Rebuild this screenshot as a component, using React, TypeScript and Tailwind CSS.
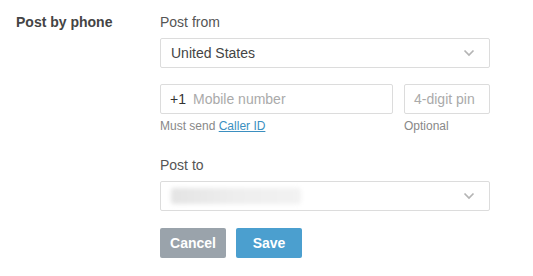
import React from "react";

function Chevron() {
  return (
    <svg width="12" height="8" viewBox="0 0 12 8" className="absolute right-[14px] top-1/2 -translate-y-1/2">
      <path d="M1.5 1.5 L6 6 L10.5 1.5" fill="none" stroke="#b4b4b4" strokeWidth="1.7" />
    </svg>
  );
}

export default function App() {
  return (
    <div
      className="w-[533px] h-[276px] bg-white flex text-[#444]"
      style={{ fontFamily: '"Liberation Sans", Arial, sans-serif' }}
    >
      <div className="w-[160px] pl-[16px] pt-[13px]">
        <div className="text-[14px] font-bold leading-[18px] text-[#444]">Post by phone</div>
      </div>
      <div className="w-[330px] pt-[13px] flex flex-col">
        <div className="text-[14px] leading-[18px] text-[#555] mb-[7px]">Post from</div>
        <div className="relative h-[30px] border border-[#dcdcdc] rounded-[2px] flex items-center pl-[10px] text-[14px] text-[#444]">
          United States
          <Chevron />
        </div>
        <div className="flex gap-[11px] mt-[16px]">
          <div className="flex flex-col w-[233px]">
            <div className="h-[30px] border border-[#dcdcdc] rounded-[2px] flex items-center pl-[9px] text-[14px]">
              <span className="text-[#333]">+1</span>
              <span className="ml-[7px] text-[#aaa]">Mobile number</span>
            </div>
            <div className="mt-[4px] text-[12px] leading-[16px] text-[#888]">
              Must send <span className="text-[#3b8fc0] underline">Caller ID</span>
            </div>
          </div>
          <div className="flex flex-col w-[86px]">
            <div className="h-[30px] border border-[#dcdcdc] rounded-[2px] flex items-center pl-[9px] text-[14px] text-[#aaa]">
              4-digit pin
            </div>
            <div className="mt-[4px] text-[12px] leading-[16px] text-[#888]">Optional</div>
          </div>
        </div>
        <div className="text-[14px] leading-[18px] text-[#555] mt-[22px] mb-[7px]">Post to</div>
        <div className="relative h-[30px] border border-[#dcdcdc] rounded-[2px] flex items-center pl-[10px]">
          <div className="w-[130px] h-[16px] rounded-[3px] blur-[2px] bg-gradient-to-r from-[#e4e4e4] via-[#eeeeee] to-[#f2f2f2]" />
          <Chevron />
        </div>
        <div className="flex gap-[10px] mt-[17px]">
          <button className="w-[66px] h-[30px] rounded-[2px] bg-[#9aa3ab] text-white font-bold text-[14px]">Cancel</button>
          <button className="w-[66px] h-[30px] rounded-[2px] bg-[#4b9fcf] text-white font-bold text-[14px]">Save</button>
        </div>
      </div>
    </div>
  );
}
